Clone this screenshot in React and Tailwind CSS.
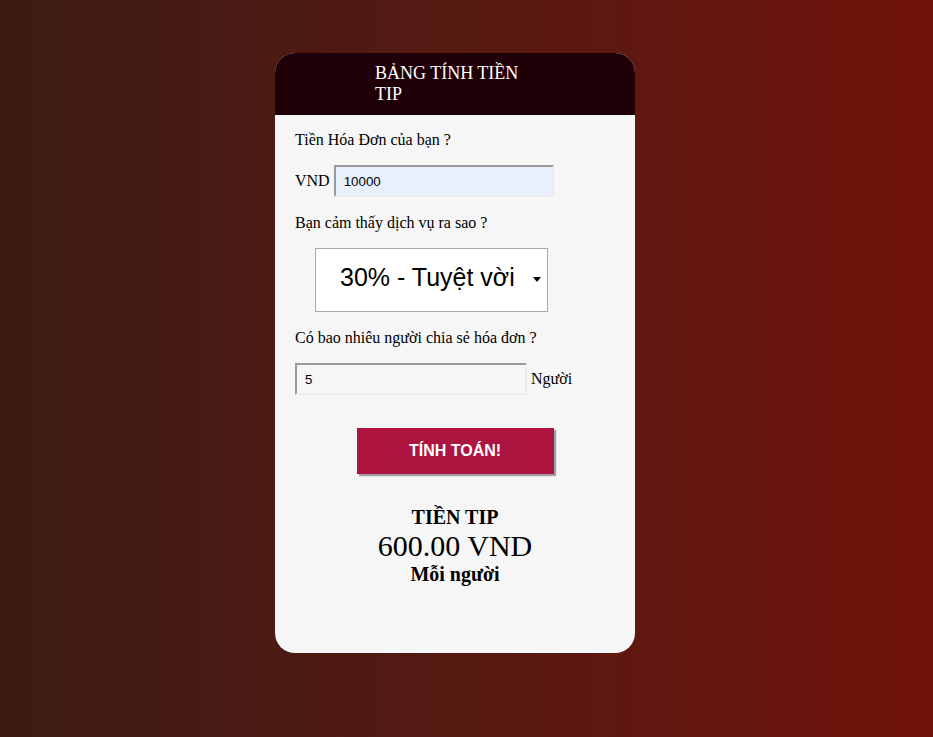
import { useState } from 'react'

const serif = "font-['Liberation_Serif','Times_New_Roman',serif]"
const sans = "font-['Liberation_Sans',Arial,sans-serif]"

const tipOptions = [
  { value: '0.3', label: '30% - Tuyệt vời' },
  { value: '0.2', label: '20% - Tốt' },
  { value: '0.15', label: '15% - Bình thường' },
  { value: '0.1', label: '10% - Tệ' },
  { value: '0.05', label: '5% - Rất tệ' },
]

export default function App() {
  const [bill, setBill] = useState('10000')
  const [tip, setTip] = useState('0.3')
  const [people, setPeople] = useState('5')
  const [result, setResult] = useState('600.00')

  const calculate = () => {
    const total = (parseFloat(bill) || 0) * parseFloat(tip)
    const n = parseInt(people) || 1
    setResult((total / n).toFixed(2))
  }

  return (
    <div className="min-h-screen bg-gradient-to-r from-[#3c1b15] to-[#70120a] pt-[53px] pl-[275px]">
      <div className={`w-[360px] h-[600px] rounded-[20px] bg-[#f6f6f6] overflow-hidden leading-[normal] ${serif}`}>
        {/* Header */}
        <div className="h-[62px] bg-[#200008] py-[10px]">
          <h1 className="ml-[100px] w-[160px] text-[18px] leading-[21px] text-white font-normal">
            BẢNG TÍNH TIỀN TIP
          </h1>
        </div>

        {/* Form */}
        <div className="px-[20px] pt-[16px] text-[16px] text-black">
          <p>Tiền Hóa Đơn của bạn ?</p>
          <div className="mt-[16px] flex items-center gap-[4px]">
            <span>VND</span>
            <input
              value={bill}
              onChange={(e) => setBill(e.target.value)}
              className={`w-[220px] h-[32px] px-[8px] bg-[#e8f0fe] text-[13.33px] border-2 border-t-[#999] border-l-[#999] border-r-[#ececec] border-b-[#ececec] outline-none ${sans}`}
            />
          </div>

          <p className="mt-[17px]">Bạn cảm thấy dịch vụ ra sao ?</p>
          <div className="relative mt-[16px] ml-[20px] w-[233px] h-[64px]">
            <select
              value={tip}
              onChange={(e) => setTip(e.target.value)}
              className={`appearance-none w-full h-full bg-white border border-[#a9a9a9] pl-[24px] pb-[6px] text-[25px] text-black outline-none ${sans}`}
            >
              {tipOptions.map((o) => (
                <option key={o.value} value={o.value}>
                  {o.label}
                </option>
              ))}
            </select>
            <span className="pointer-events-none absolute right-[7px] top-[29px] w-0 h-0 border-l-[4px] border-r-[4px] border-t-[5px] border-l-transparent border-r-transparent border-t-black" />
          </div>

          <p className="mt-[17px]">Có bao nhiêu người chia sẻ hóa đơn ?</p>
          <div className="mt-[16px] flex items-center gap-[4px]">
            <input
              value={people}
              onChange={(e) => setPeople(e.target.value)}
              className={`w-[232px] h-[32px] px-[8px] bg-[#f6f6f6] text-[13.33px] border-2 border-t-[#999] border-l-[#999] border-r-[#ececec] border-b-[#ececec] outline-none ${sans}`}
            />
            <span>Người</span>
          </div>

          <div className="mt-[33px] flex justify-center">
            <button
              onClick={calculate}
              className={`w-[197px] h-[46px] bg-[#ad1540] text-white text-[16px] font-bold shadow-[2px_2px_1px_#a0a0a0] ${sans}`}
            >
              TÍNH TOÁN!
            </button>
          </div>

          <div className="mt-[32px] text-center">
            <div className="text-[20px] font-bold">TIỀN TIP</div>
            <div className="text-[30px]">{result} VND</div>
            <div className="text-[20px] font-bold">Mỗi người</div>
          </div>
        </div>
      </div>
    </div>
  )
}
